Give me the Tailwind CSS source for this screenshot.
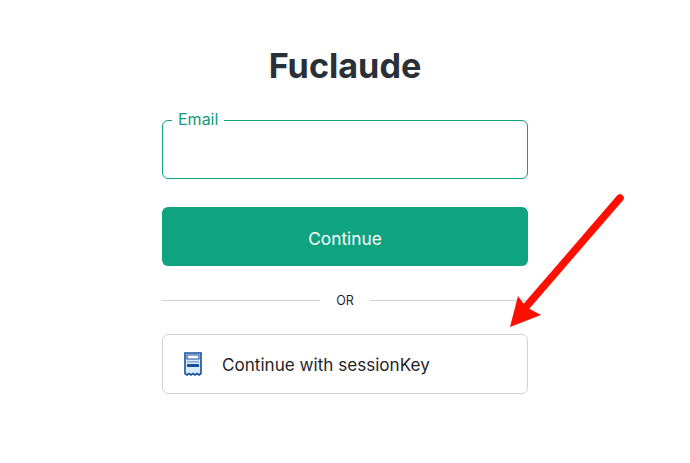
<!DOCTYPE html>
<html>
<head>
<meta charset="utf-8">
<script src="https://cdn.jsdelivr.net/npm/@tailwindcss/browser@4"></script>
</head>
<body class="bg-white">
<main class="relative w-[690px] h-[463px] overflow-hidden bg-white font-['Inter',sans-serif]">
  <div class="flex flex-col items-center pt-[41px]">
    <h1 class="h-[50px] text-[34.2px] leading-[50px] font-bold text-[#2a3037]">Fuclaude</h1>
    <div class="w-[366px] mt-[29px] flex flex-col">
      <div class="relative h-[59px] rounded-[6px] border border-[#10a37f]">
        <label class="absolute left-[9px] top-[-12px] bg-white px-[6px] text-[16px] leading-[20px] text-[#0d9b78]">Email</label>
      </div>
      <button class="h-[59px] mt-[28px] pt-[4px] rounded-[6px] bg-[#10a37f] text-white text-[17.3px]">Continue</button>
      <div class="flex items-center mt-[25px] h-[18px]">
        <div class="flex-1 h-px bg-[#cfd2d6]"></div>
        <span class="w-[50px] pt-[1px] text-center text-[12.5px] leading-[18px] text-[#1f2328]">OR</span>
        <div class="flex-1 h-px bg-[#cfd2d6]"></div>
      </div>
      <button class="h-[60px] mt-[25px] rounded-[6px] border border-[#cfd2d6] flex items-center pl-[21px] text-[#1f2328] text-[17.1px]">
        <svg class="w-[18px] h-[24px] shrink-0" viewBox="0 0 18 24">
          <path d="M1 1H17V21.5L15 23L13 21.5L11 23L9 21.5L7 23L5 21.5L3 23L1 21.5Z" fill="#d9ecfb" stroke="#154f9e" stroke-width="1.6"/>
          <rect x="3" y="3" width="12" height="4" fill="#fff" stroke="#154f9e" stroke-width="1"/>
          <rect x="3" y="9" width="12" height="1.6" fill="#8fa9cf"/>
          <rect x="3" y="12" width="12" height="3" fill="#154f9e"/>
        </svg>
        <span class="ml-[20px] pt-[2px]">Continue with sessionKey</span>
      </button>
    </div>
  </div>
  <svg class="absolute left-0 top-0 pointer-events-none" width="690" height="463" viewBox="0 0 690 463">
    <line x1="620" y1="198" x2="525" y2="308" stroke="#ff0f00" stroke-width="7.5" stroke-linecap="round"/>
    <path d="M510 327L518 296L526 307L541 315Z" fill="#ff0f00"/>
  </svg>
</main>
</body>
</html>
